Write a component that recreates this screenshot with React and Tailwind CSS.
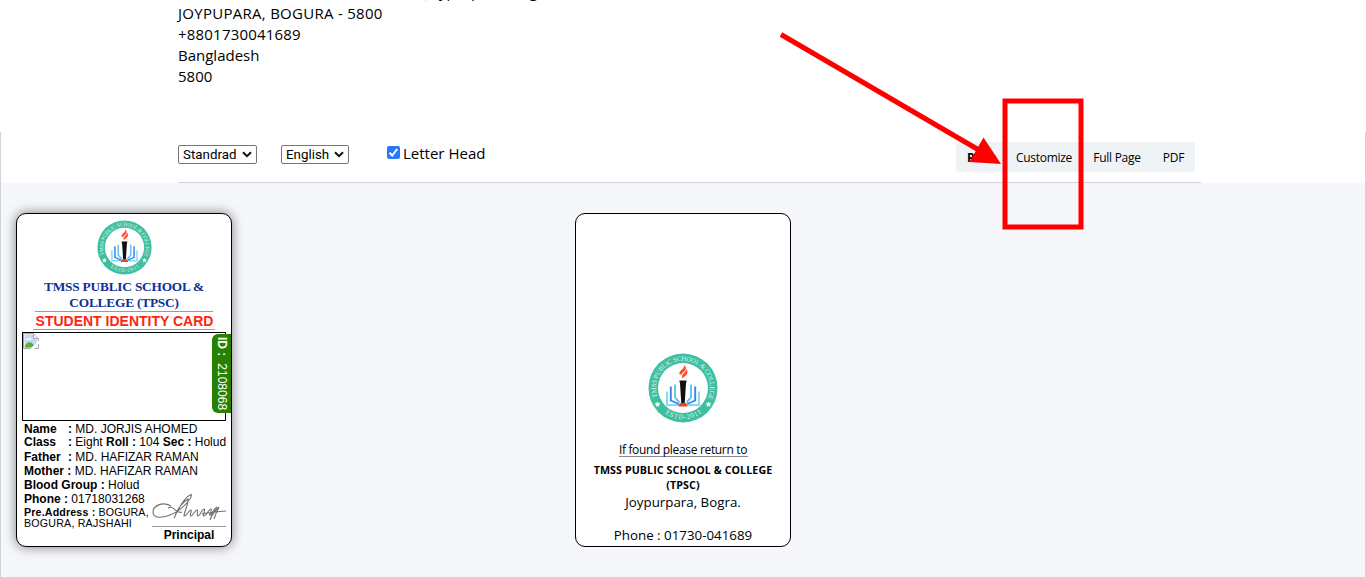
import React from "react";

function Logo({ className, id }) {
  return (
    <svg viewBox="0 0 70 70" className={className}>
      <defs>
        <path id={id + "t"} d="M9.6 44 A27 27 0 1 1 60.4 44" />
        <path id={id + "b"} d="M12.500 56.500 A31 31 0 0 0 57.500 56.500" />
      </defs>
      <circle cx="35" cy="35" r="34.5" fill="#3fbfa0" />
      <circle cx="35" cy="35" r="25" fill="#fff" />
      <text fontSize="6.8" fill="#d9f5ec" fontFamily="Liberation Serif, serif">
        <textPath href={"#" + id + "t"} textLength="105">TMSS PUBLIC SCHOOL &amp; COLLEGE</textPath>
      </text>
      <text fontSize="6.8" fill="#d9f5ec" fontFamily="Liberation Serif, serif">
        <textPath href={"#" + id + "b"} startOffset="6" textLength="39">ESTD-2011</textPath>
      </text>
      <path d="M9.5 49l.7 1.4 1.6.2-1.2 1.1.3 1.6-1.4-.8-1.4.8.3-1.6-1.2-1.1 1.6-.2zM60.5 49l.7 1.4 1.6.2-1.2 1.1.3 1.6-1.4-.8-1.4.8.3-1.6-1.2-1.1 1.6-.2z" fill="#fff" stroke="#fff" strokeWidth=".8" />
      <g fill="none" strokeWidth="1.9">
        <path d="M19 38.500v13.500l11 0M51 38.500v13.500l-11 0" stroke="#7edcf8" />
        <path d="M22.800 33.500v14l8 3.500M47.200 33.500v14l-8 3.500" stroke="#3f83e8" />
        <path d="M27 31.500v13l4.500 5M43 31.500v13l-4.500 5" stroke="#5cc4f5" />
      </g>
      <path d="M31.300 27.500h7.400l-.7 3-1.300 20h-3.400l-1.300-20z" fill="#111" />
      <path d="M32.500 50h5l2 1.500v2h-9v-2z" fill="#e5452d" />
      <path d="M31.500 21c0-4 5-4.500 5-8.500 3 4-1 5.500-3.500 9zM34 25c0-4 3-4.500 4.500-8.500 2 4-.5 6-4.500 8.500z" fill="#ff4528" stroke="#ff4528" strokeWidth=".5" />
    </svg>
  );
}

function Select({ className, children }) {
  return (
    <div className={"flex h-[19px] items-center justify-between rounded-[2px] border border-[#767676] pr-[4px] pl-1 font-[Roboto] text-[13.33px] leading-none text-black " + className}>
      {children}
      <svg viewBox="0 0 10 7" className="h-[7px] w-[10px]"><path d="M1 1.200l4 4 4-4" fill="none" stroke="#111" strokeWidth="2" /></svg>
    </div>
  );
}

function Row({ className, children }) {
  return <div className={"whitespace-nowrap " + className}>{children}</div>;
}

function FrontCard() {
  return (
    <div className="relative h-[334px] w-[216px] shrink-0 rounded-[10px] border border-black bg-white font-['Liberation_Sans',sans-serif] text-black shadow-[0_0_12px_rgba(0,0,0,0.5)]">
      <Logo id="front" className="mt-[6px] ml-[80px] h-[55px] w-[55px]" />
      <div className="mt-[4px] text-center font-['Liberation_Serif',serif] text-[13.33px] leading-4 font-bold tracking-[-0.2px] text-[#0f3095]">
        <div>TMSS PUBLIC SCHOOL &amp;</div>
        <div>COLLEGE (TPSC)</div>
      </div>
      <div className="mx-auto h-px w-[178px] bg-[#999]" />
      <div className="pt-px pl-px text-center text-[14px] leading-[17px] font-bold whitespace-nowrap text-[#ff2412]">STUDENT IDENTITY CARD</div>
      <div className="mx-auto -mt-px h-px w-[182px] bg-[#999]" />
      <div className="mt-[2px] ml-[5px] h-[89px] w-[204px] border border-black">
        <svg viewBox="0 0 16 16" className="h-4 w-4">
          <path d="M.5.5h10l5 5v10H.5z" fill="#fff" stroke="#a8a8a8" />
          <path d="M1.500 1.500h8.500v4h4v9H1.500z" fill="#c4d7f4" />
          <path d="M3 7c0-2 2-2 2.500-1C6 4 9 5 8 7z" fill="#fff" />
          <path d="M1.500 14.500C3 9 7 8 10 11l2 3.500z" fill="#5cac43" />
          <path d="M7 16L16 7.500V11l-5 5z" fill="#fff" />
          <path d="M10.500.5v5h5" fill="#eee" stroke="#a8a8a8" />
        </svg>
      </div>
      <div className="absolute top-[120px] right-0 flex h-[79px] w-[19px] items-center justify-center rounded-l-[6px] bg-[#278202] text-[12px] whitespace-pre text-white [writing-mode:vertical-rl]"><b>ID : </b> 2108068</div>
      <div className="pl-[7px] text-[12px] leading-[14px]">
        <Row className="mt-[1px]"><b className="inline-block w-[44px]">Name</b><b>:</b> MD. JORJIS AHOMED</Row>
        <Row className="-mt-px"><b className="inline-block w-[44px]">Class</b><b>:</b> Eight <b>Roll :</b> 104 <b>Sec :</b> Holud</Row>
        <Row className="mt-px"><b className="inline-block w-[44px]">Father</b><b>:</b> MD. HAFIZAR RAMAN</Row>
        <Row className=""><b>Mother :</b> MD. HAFIZAR RAMAN</Row>
        <Row className=""><b>Blood Group :</b> Holud</Row>
        <Row className=""><b>Phone :</b> 01718031268</Row>
        <Row className="mt-[1px] text-[10.67px] leading-[11px] tracking-[0.16px]"><b>Pre.Address :</b> BOGURA,</Row>
        <Row className="text-[10.67px] leading-[11px] tracking-[0.2px]">BOGURA, RAJSHAHI</Row>
      </div>
      <div className="absolute right-[5px] bottom-[4px] w-[74px] text-center text-[12px] leading-[14px] font-bold">
        <svg viewBox="0 0 74 32" className="h-[32px] w-[74px]">
          <path d="M19 12C10 7 1 12 1 18c0 7 9 6 17 3 8-3 15-9 20-16 2-4 2-5 0-4-4 2-10 11-14 19-2 4-2 5-1 2 2-7 8-14 13-17 1 4-4 13-4 17 2 1 4-5 7-6 1 1-2 6 0 6s4-6 6-6-1 6 1 6 4-7 6-7-2 7 0 7 5-7 7-7-3 7-1 6 4-6 7-8c-3 3-6 10-7 13 2-6 6-10 9-13-2 4-4 9-5 12M16 14c6-4 8 7 14 4M50 20c8-2 16-2 24-3" fill="none" stroke="#707070" strokeWidth="1.1" />
        </svg>
        <div className="h-px bg-[#999]" />
        <div className="mt-[1px]">Principal</div>
      </div>
    </div>
  );
}

function BackCard() {
  return (
    <div className="flex h-[334px] w-[216px] shrink-0 flex-col items-center rounded-[10px] border border-black bg-white pt-[139px] whitespace-nowrap text-black">
      <Logo id="back" className="h-[70px] w-[70px]" />
      <div className="mt-[18px] flex h-[16px] w-[129px] justify-center border-b border-[#888] text-[12px] leading-[17px] tracking-[-0.33px]">If found please return to</div>
      <div className="mt-[6px] text-center text-[10.67px] leading-[15px] font-bold tracking-[0.09px]">
        <div>TMSS PUBLIC SCHOOL &amp; COLLEGE</div>
        <div>(TPSC)</div>
      </div>
      <div className="mt-[1px] text-[13.33px] leading-[16px]">Joypurpara, Bogra.</div>
      <div className="mt-[17px] text-[13.33px] leading-[16px]">Phone : 01730-041689</div>
    </div>
  );
}

export default function App() {
  return (
    <div className="relative flex h-[578px] w-[1366px] flex-col overflow-hidden bg-white font-['Open_Sans',sans-serif] text-black">
      <div className="h-[132px] shrink-0 pl-[178px]">
        <div className="-mt-[18px] text-[15px] leading-[21px] whitespace-nowrap">
          <div className="h-[21px] leading-[19px]">TMSS PUBLIC SCHOOL &amp; COLLEGE, Joypurpara, Bogra</div>
          <div className="tracking-[0.28px]">JOYPUPARA, BOGURA - 5800</div>
          <div className="tracking-[0.2px]">+8801730041689</div>
          <div>Bangladesh</div>
          <div>5800</div>
        </div>
      </div>
      <div className="flex grow flex-col border-x border-b border-[#ced4da]">
        <div className="mr-[164px] ml-[177px] flex h-[51px] items-start border-b border-[#ced4da]">
          <Select className="mt-[13px] w-[79px]">Standrad</Select>
          <Select className="mt-[13px] ml-[24px] w-[68px]">English</Select>
          <div className="mt-[14px] ml-[38px] flex h-[13px] w-[13px] items-center justify-center rounded-[2px] bg-[#2878ff]">
            <svg viewBox="0 0 13 13" className="h-[13px] w-[13px]"><path d="M2.500 6.800l2.700 2.700 5-6.500" fill="none" stroke="#fff" strokeWidth="2" /></svg>
          </div>
          <div className="mt-[11px] ml-[3px] text-[15px] leading-[21px]">Letter Head</div>
          <div className="mt-[10px] mr-[6px] ml-auto flex h-[30px] text-[12px] leading-[32px] tracking-[-0.28px]">
            <div className="w-[50px] rounded-[3px] bg-[#eff3f6] pl-[11px] font-bold">Print</div>
            <div className="w-[76px] rounded-[3px] bg-[#eff3f6] text-center">Customize</div>
            <div className="w-[70px] rounded-[3px] bg-[#eff3f6] text-center">Full Page</div>
            <div className="w-[43px] rounded-[3px] bg-[#eff3f6] text-center">PDF</div>
          </div>
        </div>
        <div className="flex grow gap-[343px] bg-[#f5f7fb] pt-[30px] pl-[15px]">
          <FrontCard />
          <BackCard />
        </div>
      </div>
      <svg viewBox="0 0 310 215" className="absolute top-[20px] left-[778px] h-[215px] w-[310px]">
        <path d="M3 14.500L206 133" stroke="#f00" strokeWidth="5" />
        <path d="M205.500 117.500L223 144l-31.500-2z" fill="#f00" />
        <rect x="227" y="81" width="76" height="126" fill="none" stroke="#f00" strokeWidth="5" />
      </svg>
    </div>
  );
}
